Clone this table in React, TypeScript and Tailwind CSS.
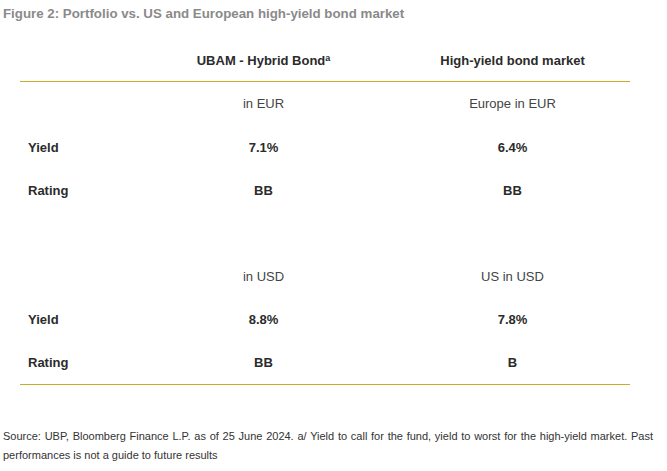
import React from 'react';

interface Row {
    label: string;
    fund: string;
    market: string;
}

const blocks: { fundCcy: string; marketCcy: string; rows: Row[] }[] = [
    {
        fundCcy: 'in EUR',
        marketCcy: 'Europe in EUR',
        rows: [
            { label: 'Yield', fund: '7.1%', market: '6.4%' },
            { label: 'Rating', fund: 'BB', market: 'BB' }
        ]
    },
    {
        fundCcy: 'in USD',
        marketCcy: 'US in USD',
        rows: [
            { label: 'Yield', fund: '8.8%', market: '7.8%' },
            { label: 'Rating', fund: 'BB', market: 'B' }
        ]
    }
];

const grid = 'grid grid-cols-[144px_199px_50px_199px] items-center';

export default function App() {
    return (
        <div className="w-[667px] h-[471px] bg-white px-[3px] pt-[5px] text-[#333333] font-['Liberation_Sans',Arial,sans-serif]">
            <h1 className="text-[13.3px] leading-[18px] font-bold text-[#8a8a8a]">
                Figure 2: Portfolio vs. US and European high-yield bond market
            </h1>

            <div className="ml-[17px] w-[610px] mt-[18px] text-[13px] text-[#2b2b2b]">
                {/* Column headers */}
                <div className={`${grid} h-[40px] font-bold`}>
                    <div />
                    <div className="text-center">
                        UBAM - Hybrid Bond<sup className="text-[9px]">a</sup>
                    </div>
                    <div />
                    <div className="text-center">High-yield bond market</div>
                </div>
                <div className="h-px bg-[#c4ae2c]" />

                {blocks.map((block, i) => (
                    <div key={block.fundCcy}>
                        {i > 0 && <div className="h-[43px]" />}
                        <div className={`${grid} ${i === 0 ? 'h-[44px]' : 'h-[43px]'} text-[#444444]`}>
                            <div />
                            <div className="text-center">{block.fundCcy}</div>
                            <div />
                            <div className="text-center">{block.marketCcy}</div>
                        </div>
                        {block.rows.map((row) => (
                            <div key={row.label} className={`${grid} h-[43px] font-bold`}>
                                <div className="pl-[8px]">{row.label}</div>
                                <div className="text-center">{row.fund}</div>
                                <div />
                                <div className="text-center">{row.market}</div>
                            </div>
                        ))}
                    </div>
                ))}
                <div className="h-px bg-[#c4ae2c]" />
            </div>

            <p className="mt-[42px] w-[650px] text-[11px] leading-[19px] text-justify text-[#333333]">
                Source: UBP, Bloomberg Finance L.P. as of 25 June 2024. a/ Yield to call for the fund, yield to worst for the high-yield market. Past performances is not a guide to future results
            </p>
        </div>
    );
}
